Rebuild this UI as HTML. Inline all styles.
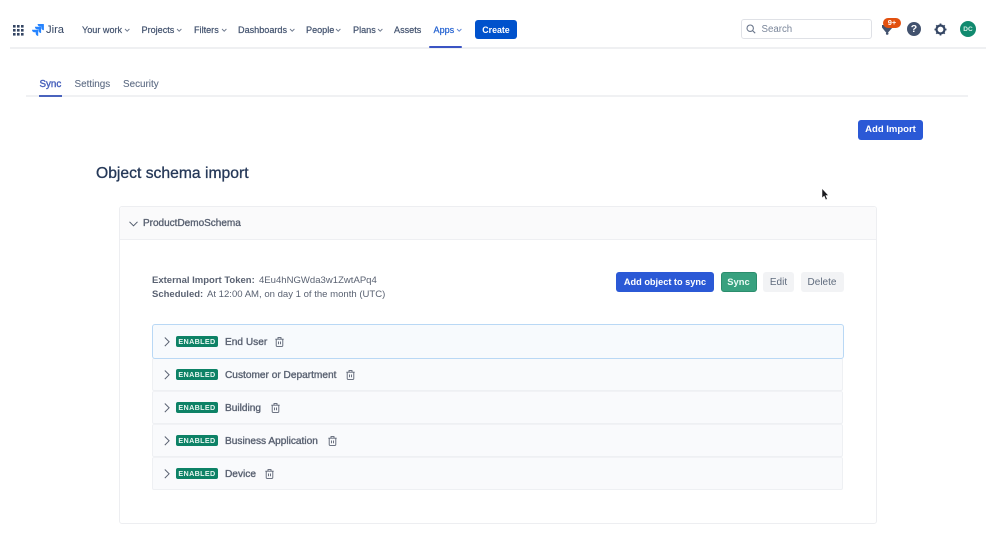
<!DOCTYPE html>
<html lang="en"><head><meta charset="utf-8"><title>Object schema import</title>
<style>
html,body{margin:0;padding:0;background:#fff}
body{width:999px;height:555px;overflow:hidden;position:relative;font-family:"Liberation Sans",sans-serif;color:#42526e}
#w{position:absolute;left:0;top:0;width:999px;height:555px;filter:blur(.3px)}
.a{position:absolute;white-space:nowrap}
.n{top:23px;font-size:9.100px;line-height:14px;color:#42526e;-webkit-text-stroke:.2px}
svg{position:absolute;overflow:visible}
.btn{position:absolute;box-sizing:border-box;border-radius:3px;text-align:center;font-size:9.300px;font-weight:bold;white-space:nowrap}
.row{position:absolute;left:152px;width:691px;height:33px;box-sizing:border-box;background:#f9fafc;border:1px solid #eef0f3;border-top-color:#f1f2f5;border-radius:2px}
.lz{position:absolute;left:176px;width:42px;height:11px;background:#0d8266;border-radius:2px;color:#e6f5f0;font-size:7.200px;font-weight:bold;line-height:11.500px;text-align:center;letter-spacing:.35px}
.t{position:absolute;left:225px;font-size:10.150px;color:#5a6272;line-height:14px;white-space:nowrap;-webkit-text-stroke:.35px #5a6272}
</style></head><body><div id="w">

<div class="a" style="left:10px;top:47px;width:976px;height:2px;background:#eff0f2"></div>

<svg style="left:13px;top:25px" width="11" height="11" fill="#344563"><rect x="0" y="0" width="2.600" height="2.600"/><rect x="4" y="0" width="2.600" height="2.600"/><rect x="8" y="0" width="2.600" height="2.600"/><rect x="0" y="4" width="2.600" height="2.600"/><rect x="4" y="4" width="2.600" height="2.600"/><rect x="8" y="4" width="2.600" height="2.600"/><rect x="0" y="8" width="2.600" height="2.600"/><rect x="4" y="8" width="2.600" height="2.600"/><rect x="8" y="8" width="2.600" height="2.600"/></svg>
<svg style="left:32px;top:24px" width="12" height="12" viewBox="0 0 12 12" fill="#2684ff"><path d="M11.400 0H5.600c0 1.500 1.200 2.600 2.600 2.600h1.100v1c0 1.400 1.100 2.600 2.600 2.600V.5c0-.3-.2-.5-.5-.5z"/><path d="M8.600 2.800H2.900c0 1.400 1.100 2.600 2.600 2.600h1v1.100c0 1.400 1.200 2.500 2.600 2.500V3.300c0-.3-.2-.5-.5-.5z"/><path d="M5.700 5.700H0c0 1.500 1.200 2.600 2.600 2.600h1.100v1c0 1.500 1.100 2.700 2.500 2.700V6.200c0-.3-.2-.5-.5-.5z"/></svg>
<div class="a" style="left:46px;top:22px;font-size:11.200px;line-height:16px;color:#344563">Jira</div>

<div class="a n" style="left:82px">Your work</div>
<div class="a n" style="left:141.500px">Projects</div>
<div class="a n" style="left:194px">Filters</div>
<div class="a n" style="left:238px">Dashboards</div>
<div class="a n" style="left:306px">People</div>
<div class="a n" style="left:353px">Plans</div>
<div class="a n" style="left:394px">Assets</div>
<div class="a n" style="left:433.500px;color:#1f5fd0;-webkit-text-stroke:.2px #1f5fd0">Apps</div>
<svg style="left:0;top:0" width="999" height="60" fill="none" stroke="#6b778c" stroke-width=".9"><path d="M125 29l2.200 2.200 2.200-2.200M177 29l2.200 2.200 2.200-2.200M222 29l2.200 2.200 2.200-2.200M290 29l2.200 2.200 2.200-2.200M336 29l2.200 2.200 2.200-2.200M378 29l2.200 2.200 2.200-2.200"/><path stroke="#5b84d6" d="M457 29l2.200 2.200 2.200-2.200"/></svg>
<div class="a" style="left:429px;top:46px;width:33px;height:2px;background:#3b54c4;border-radius:1px"></div>
<div class="btn" style="left:475px;top:20px;width:42px;height:19px;line-height:20px;background:#0052cc;color:#fff;font-size:8.800px">Create</div>

<div class="a" style="left:741px;top:19px;width:131px;height:20px;box-sizing:border-box;border:1px solid #dfe1e6;border-radius:3px;background:#fff"></div>
<svg style="left:746px;top:24px" width="10" height="10" fill="none" stroke="#6b778c" stroke-width="1.100"><circle cx="4.200" cy="4.200" r="3.200"/><path d="M6.600 6.600L9.200 9.200"/></svg>
<div class="a" style="left:761.500px;top:23px;font-size:9.700px;line-height:14px;color:#7a869a">Search</div>

<svg style="left:882px;top:25px" width="11" height="11" fill="#42526e"><path d="M0 0h10.500v2.500L7 6.500c-.3.300-.7 1-1.700 1.200C4 7.700 3.600 7 3.200 6.500L0 2.500z"/><circle cx="5.200" cy="8.500" r="1.300"/></svg>
<div class="a" style="left:883px;top:18px;width:18px;height:10px;border-radius:5px;background:#e2500f;color:#fff;font-size:7.500px;font-weight:bold;line-height:10.500px;text-align:center">9+</div>
<div class="a" style="left:907px;top:22px;width:14px;height:14px;border-radius:50%;background:#42526e;color:#fff;font-size:10.500px;font-weight:bold;line-height:14.500px;text-align:center">?</div>
<svg style="left:934px;top:23px" width="13" height="13" viewBox="0 0 13 13" fill="none"><circle cx="6.500" cy="6.500" r="4" stroke="#344563" stroke-width="2.200"/><g stroke="#344563" stroke-width="1.700"><path d="M6.500 .5v2M6.500 10.500v2M.5 6.500h2M10.500 6.500h2M2.300 2.300l1.300 1.300M9.400 9.400l1.300 1.300M2.300 10.700l1.300-1.300M9.400 3.600l1.300-1.300"/></g></svg>
<div class="a" style="left:960px;top:21px;width:16px;height:16px;border-radius:50%;background:#118a6f;color:#d8f0e8;font-size:6.500px;font-weight:bold;line-height:17px;text-align:center">DC</div>

<div class="a" style="left:39.500px;top:77.500px;font-size:9.800px;line-height:14px;color:#4a63bd;-webkit-text-stroke:.4px #4a63bd">Sync</div>
<div class="a" style="left:74.500px;top:77.500px;font-size:9.900px;line-height:14px;color:#5e6c84;-webkit-text-stroke:.1px">Settings</div>
<div class="a" style="left:123px;top:77.500px;font-size:9.900px;line-height:14px;color:#5e6c84;-webkit-text-stroke:.1px">Security</div>
<div class="a" style="left:26px;top:95px;width:942px;height:2px;background:#f0f1f3"></div>
<div class="a" style="left:39px;top:95px;width:23px;height:2px;background:#4a63bd"></div>

<div class="btn" style="left:858px;top:120px;width:65px;height:19.500px;line-height:20px;background:#2b59d6;color:#fff;font-size:9.500px">Add Import</div>

<div class="a" style="left:96px;top:163.500px;font-size:15.700px;line-height:20px;color:#253858;-webkit-text-stroke:.3px #253858">Object schema import</div>

<div class="a" style="left:119px;top:206px;width:758px;height:318px;box-sizing:border-box;border:1px solid #edeef1;border-radius:3px;background:#fff"></div>
<div class="a" style="left:120px;top:207px;width:756px;height:32px;background:#fafafb;border-bottom:1px solid #eeeff2;border-radius:3px 3px 0 0"></div>
<svg style="left:129px;top:220.500px" width="9" height="6" fill="none" stroke="#505a6b" stroke-width="1"><path d="M.5.800L4.500 4.800 8.500.800"/></svg>
<div class="a" style="left:143px;top:216.500px;font-size:10px;line-height:14px;color:#5a6272;-webkit-text-stroke:.35px #5a6272">ProductDemoSchema</div>

<div class="a" style="left:152px;top:273.500px;font-size:9.500px;line-height:14px;color:#5a6272"><b>External Import Token:</b></div>
<div class="a" style="left:259px;top:273.500px;font-size:9.550px;line-height:14px;color:#5a6272">4Eu4hNGWda3w1ZwtAPq4</div>
<div class="a" style="left:152px;top:288px;font-size:9.500px;line-height:14px;color:#5a6272"><b>Scheduled:</b></div>
<div class="a" style="left:207px;top:288px;font-size:9.550px;line-height:14px;color:#5a6272">At 12:00 AM, on day 1 of the month (UTC)</div>

<div class="btn" style="left:616px;top:272px;width:98px;height:20px;line-height:20.500px;background:#2b59d6;color:#fff;font-size:9.200px">Add object to sync</div>
<div class="btn" style="left:720.500px;top:272px;width:36px;height:20px;line-height:18.500px;background:#38a17f;border:1px solid #2b8d6d;color:#eafaf4;font-size:9.400px">Sync</div>
<div class="btn" style="left:763px;top:272px;width:31px;height:20px;line-height:21px;background:#f2f3f5;color:#5f6b7d;font-weight:normal;font-size:10px">Edit</div>
<div class="btn" style="left:800.500px;top:272px;width:43px;height:20px;line-height:21px;background:#f2f3f5;color:#5f6b7d;font-weight:normal;font-size:10px">Delete</div>

<div class="row" style="top:358px"></div>
<div class="row" style="top:391px"></div>
<div class="row" style="top:424px"></div>
<div class="row" style="top:457px"></div>
<div class="row" style="top:324px;height:35px;background:#f7fafd;border:1.500px solid #b9d8f5;border-radius:3px;width:692px"></div>

<svg style="left:0;top:0" width="999" height="555" fill="none" stroke="#5a6272" stroke-width="1"><path d="M164.800 337.500l4.300 4.300-4.300 4.300M164.800 370.500l4.300 4.300-4.300 4.300M164.800 403.500l4.300 4.300-4.300 4.300M164.800 436.500l4.300 4.300-4.300 4.300M164.800 469.500l4.300 4.300-4.300 4.300"/></svg>

<div class="lz" style="top:336px">ENABLED</div><div class="t" style="top:335.500px">End User</div>
<div class="lz" style="top:369px">ENABLED</div><div class="t" style="top:368.500px">Customer or Department</div>
<div class="lz" style="top:402px">ENABLED</div><div class="t" style="top:401.500px">Building</div>
<div class="lz" style="top:435px">ENABLED</div><div class="t" style="top:434.500px">Business Application</div>
<div class="lz" style="top:468px">ENABLED</div><div class="t" style="top:467.500px">Device</div>

<svg style="left:275px;top:337px" width="9" height="10" fill="none" stroke="#5a6272" stroke-width=".9"><path d="M.3 2.200h8.400M3 2.200V.6h3v1.600M1.200 2.200v6.300c0 .6.300.9.900.9h4.800c.6 0 .9-.3.900-.9V2.200M3.500 4.500v2.800M5.500 4.500v2.800"/></svg>
<svg style="left:346px;top:370px" width="9" height="10" fill="none" stroke="#5a6272" stroke-width=".9"><path d="M.3 2.200h8.400M3 2.200V.6h3v1.600M1.200 2.200v6.300c0 .6.300.9.900.9h4.800c.6 0 .9-.3.900-.9V2.200M3.500 4.500v2.800M5.500 4.500v2.800"/></svg>
<svg style="left:271px;top:403px" width="9" height="10" fill="none" stroke="#5a6272" stroke-width=".9"><path d="M.3 2.200h8.400M3 2.200V.6h3v1.600M1.200 2.200v6.300c0 .6.300.9.900.9h4.800c.6 0 .9-.3.900-.9V2.200M3.500 4.500v2.800M5.500 4.500v2.800"/></svg>
<svg style="left:327.500px;top:436px" width="9" height="10" fill="none" stroke="#5a6272" stroke-width=".9"><path d="M.3 2.200h8.400M3 2.200V.6h3v1.600M1.200 2.200v6.300c0 .6.300.9.900.9h4.800c.6 0 .9-.3.900-.9V2.200M3.500 4.500v2.800M5.500 4.500v2.800"/></svg>
<svg style="left:265px;top:469px" width="9" height="10" fill="none" stroke="#5a6272" stroke-width=".9"><path d="M.3 2.200h8.400M3 2.200V.6h3v1.600M1.200 2.200v6.300c0 .6.300.9.900.9h4.800c.6 0 .9-.3.900-.9V2.200M3.500 4.500v2.800M5.500 4.500v2.800"/></svg>

<svg style="left:821px;top:188px" width="8" height="13" viewBox="0 0 8 13"><path d="M1 .5v9.500l2.200-2 1.500 3.800 1.600-.7-1.500-3.600H7.500z" fill="#1b1b1f" stroke="#fff" stroke-width=".5"/></svg>
</div></body></html>
